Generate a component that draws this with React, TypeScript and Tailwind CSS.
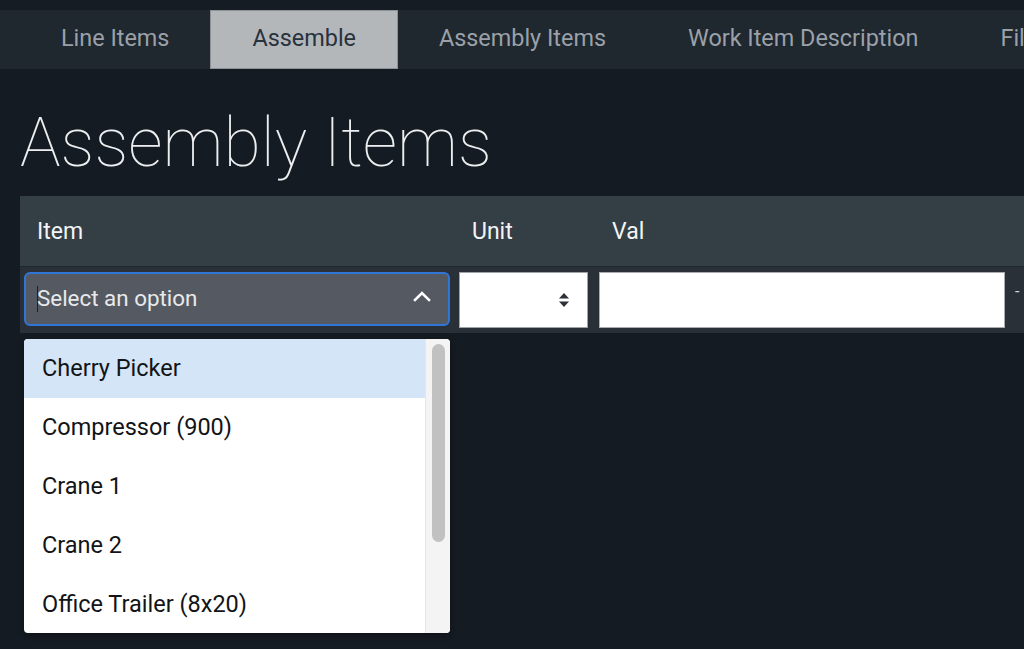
import React from "react";

const tabs = ["Line Items", "Assemble", "Assembly Items", "Work Item Description", "Files"];
const options = ["Cherry Picker", "Compressor (900)", "Crane 1", "Crane 2", "Office Trailer (8x20)"];

export default function App() {
  return (
    <div
      className="w-[1024px] h-[649px] overflow-hidden bg-[#151b22] text-white"
      style={{ fontFamily: "Roboto, 'Noto Sans', sans-serif" }}
    >
      <div className="h-[10px] bg-[#151c24]" />
      <nav className="h-[59px] bg-[#1f272f] flex pl-5 whitespace-nowrap overflow-hidden">
        {tabs.map((t) =>
          t === "Assemble" ? (
            <div
              key={t}
              className="h-full shrink-0 flex items-center pb-[2px] px-[41px] bg-[#b4b7ba] border border-[#8d9196] text-[#28323d] text-[23.4px]"
            >
              {t}
            </div>
          ) : (
            <div key={t} className="h-full shrink-0 flex items-center pb-[2px] px-[41px] text-[#9aa1a8] text-[23.4px]">
              {t}
            </div>
          )
        )}
      </nav>

      <h1 className="mt-[41px] mb-[19px] pl-5 text-[68px] leading-[67px] font-thin text-[#eceef0] whitespace-nowrap">
        Assembly Items
      </h1>

      <div className="ml-5 relative">
        <div className="h-[70px] bg-[#343e45] grid grid-cols-[435px_140px_420px_1fr] items-center text-[23px] text-[#f3f4f5]">
          <div className="pl-[17px] pt-[2px]">Item</div>
          <div className="pl-[17px] pt-[2px]">Unit</div>
          <div className="pl-[17px] pt-[2px]">Val</div>
          <div />
        </div>
        <div className="h-px bg-[#20272e]" />
        <div className="h-[66px] bg-[#293037] grid grid-cols-[435px_140px_420px_1fr] items-start pt-[5px]">
          <div className="pl-1 pr-[5px]">
            <div className="h-[54px] rounded-[6px] border-2 border-[#2f76d6] bg-[#555a62] flex items-center pl-[11px] pr-[17px]">
              <span className="w-px h-[26px] bg-[#1c1f24] -mr-px" />
              <span className="flex-1 text-[22.4px] text-[#e8e9ea]">Select an option</span>
              <svg width="18" height="12" viewBox="0 0 18 12" className="mb-[6px]">
                <polyline points="2,10 9,3 16,10" fill="none" stroke="#ffffff" strokeWidth="2.6" strokeLinecap="square" />
              </svg>
            </div>
          </div>
          <div className="pl-1">
            <div className="w-[129px] h-[56px] bg-white border border-[#9ea3a8] flex items-center justify-end pr-[17px]">
              <svg width="12" height="16" viewBox="0 0 12 16">
                <polygon points="6,1 11,6.5 1,6.5" fill="#2d3238" />
                <polygon points="1,9.5 11,9.5 6,15" fill="#2d3238" />
              </svg>
            </div>
          </div>
          <div className="pl-1 pr-[10px]">
            <div className="h-[56px] bg-white border border-[#a9adb2]" />
          </div>
          <div className="pt-[12px] text-[16px] text-[#d4d6d8] leading-none">-</div>
        </div>

        <div className="absolute left-1 top-[143px] w-[426px] h-[294px] bg-white rounded-[4px] shadow-[0_2px_6px_rgba(0,0,0,0.4)] overflow-hidden flex">
          <ul className="flex-1">
            {options.map((o, i) => (
              <li
                key={o}
                className={`h-[59px] flex items-center pl-[18px] pt-[1px] text-[23.5px] text-[#121416] ${
                  i === 0 ? "bg-[#d5e5f8]" : ""
                }`}
              >
                {o}
              </li>
            ))}
          </ul>
          <div className="w-[25px] h-full bg-[#f4f4f4] border-l border-[#e6e6e6] pt-[5px] flex justify-center">
            <div className="w-[13px] h-[198px] rounded-full bg-[#c1c1c1]" />
          </div>
        </div>
      </div>
    </div>
  );
}
